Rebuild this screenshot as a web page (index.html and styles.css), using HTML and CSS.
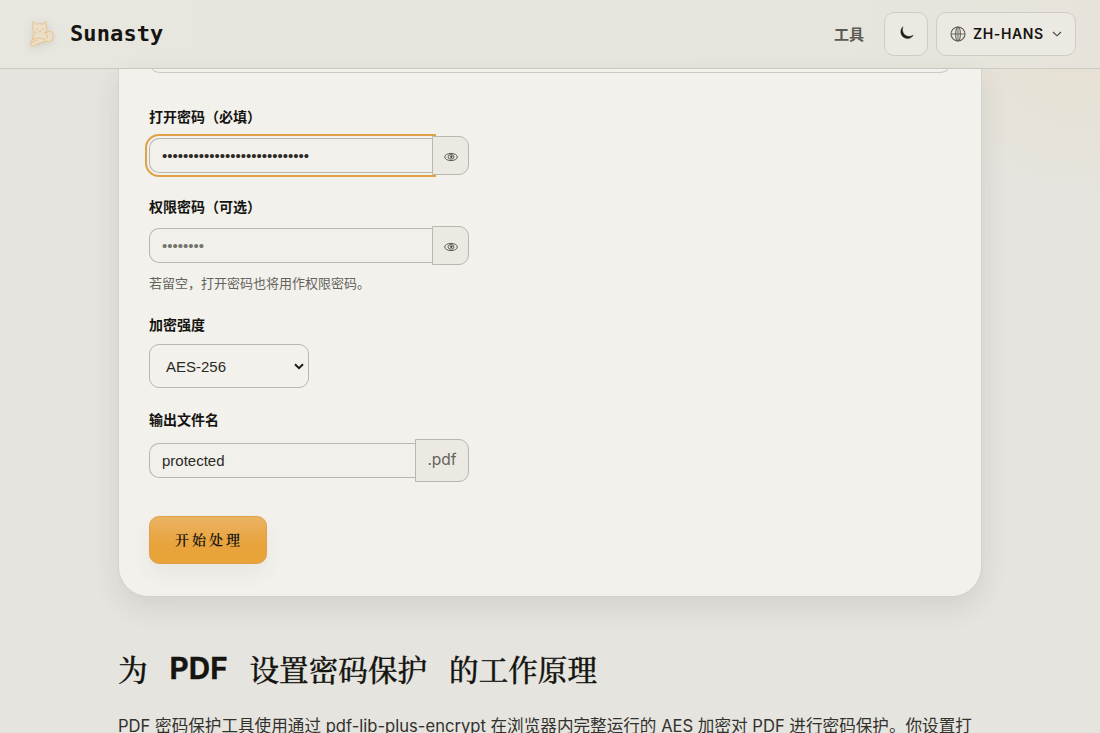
FILE: index.html
```
<!DOCTYPE html>
<html lang="zh-Hans">
<head>
    <meta charset="UTF-8">
    <meta name="viewport" content="width=device-width, initial-scale=1.0">
    <title>Sunasty</title>
    <link rel="stylesheet" href="styles.css">
</head>
<body>
    <header class="site-header">
        <a class="brand" href="#">
            <svg class="brand-logo" viewBox="0 0 24 26" fill="none" stroke="#e8c08a" stroke-width="0.9" stroke-linejoin="round" stroke-linecap="round">
                <path d="M4 1.500 L7 4 Q10 3.200 13 4 L16 1.500 L17 8 Q17.500 13 10.500 13.500 Q3.500 13 3.700 8 Z" fill="#ecdfc8"/>
                <path d="M4.500 13 L3.500 18.500 L2 21 Q1 24 3 25.300 Q5 25.500 8 23 L16 20.500 Q22 21.500 23 18 Q24 14 22 11.500 Q19 9.500 16 12.500" fill="#ecdfc8"/>
                <path d="M7 8.500 l1.500 .6 M14 8.500 l-1.500 .6 M9.500 11 q1 1 2 0 M4 18.500 Q9 16 15 18.500 L16 20.500 M16 12.500 Q18.500 15 17.500 18 M2.500 21.500 L8 19.500"/>
            </svg>
            <span class="brand-name">Sunasty</span>
        </a>
        <nav class="nav">
            <a class="nav-link" href="#">工具</a>
            <button class="nav-button theme-button" aria-label="Theme">
                <svg width="14" height="14" viewBox="0 0 14 14">
                    <path d="M3 .7 C1.500 4.500 3.200 9.300 8 10.300 C10 10.800 12 10 13.200 9.100 C11.500 12.700 7 13.700 3.600 11.200 C-.2 8.400 .1 3 3 .7 Z" fill="#1c1b18" stroke="#1c1b18" stroke-width=".4"/>
                </svg>
            </button>
            <button class="nav-button lang-button">
                <svg width="16" height="16" viewBox="0 0 16 16" fill="none" stroke="#5c5a52" stroke-width="1.100">
                    <circle cx="8" cy="8" r="7"/>
                    <ellipse cx="8" cy="8" rx="2.300" ry="7"/>
                    <path d="M1 8 H15 M8 1 V15" stroke-width=".9"/>
                </svg>
                <span>ZH-HANS</span>
                <svg class="chevron" width="10" height="6" viewBox="0 0 10 6" fill="none" stroke="#44423c" stroke-width="1.100">
                    <path d="M1 1 L5 4.800 L9 1"/>
                </svg>
            </button>
        </nav>
    </header>

    <main class="page">
        <section class="tool-card">
            <div class="drop-area"></div>

            <form class="tool-form">
                <div class="field">
                    <label for="open-password">打开密码（必填）</label>
                    <div class="input-row">
                        <div class="input focused" id="open-password">••••••••••••••••••••••••••••</div>
                        <button type="button" class="addon eye-button" aria-label="显示密码">
                            <svg class="eye" viewBox="0 0 14 10" fill="none" stroke="#4a4842">
                                <ellipse cx="7" cy="5" rx="6.300" ry="3.600" stroke-width=".9"/>
                                <ellipse cx="7" cy="4.900" rx="3" ry="2.300" stroke-width=".9"/>
                                <circle cx="7.300" cy="4.800" r="1.200" fill="#4a4842" stroke="none"/>
                            </svg>
                        </button>
                    </div>
                </div>

                <div class="field">
                    <label for="owner-password">权限密码（可选）</label>
                    <div class="input-row">
                        <div class="input placeholder" id="owner-password">••••••••</div>
                        <button type="button" class="addon eye-button" aria-label="显示密码">
                            <svg class="eye" viewBox="0 0 14 10" fill="none" stroke="#4a4842">
                                <ellipse cx="7" cy="5" rx="6.300" ry="3.600" stroke-width=".9"/>
                                <ellipse cx="7" cy="4.900" rx="3" ry="2.300" stroke-width=".9"/>
                                <circle cx="7.300" cy="4.800" r="1.200" fill="#4a4842" stroke="none"/>
                            </svg>
                        </button>
                    </div>
                    <p class="hint">若留空，打开密码也将用作权限密码。</p>
                </div>

                <div class="field">
                    <label for="strength">加密强度</label>
                    <div class="select" id="strength">
                        <span>AES-256</span>
                        <svg width="10" height="7" viewBox="0 0 10 7" fill="none" stroke="#1c1b18" stroke-width="2">
                            <path d="M1 1.200 L5 5.200 L9 1.200"/>
                        </svg>
                    </div>
                </div>

                <div class="field">
                    <label for="filename">输出文件名</label>
                    <div class="input-row file-row">
                        <input class="input" id="filename" type="text" value="protected">
                        <span class="addon suffix">.pdf</span>
                    </div>
                </div>

                <button type="button" class="submit-button">开始处理</button>
            </form>
        </section>

        <section class="article">
            <h2><span>为</span><span class="latin">PDF</span><span>设置密码保护</span><span>的工作原理</span></h2>
            <p>PDF 密码保护工具使用通过 pdf-lib-plus-encrypt 在浏览器内完整运行的 AES 加密对 PDF 进行密码保护。你设置打</p>
        </section>
    </main>
</body>
</html>
```

FILE: styles.css
```
* {
    margin: 0;
    padding: 0;
    box-sizing: border-box;
}

body {
    height: 733px;
    overflow: hidden;
    background: radial-gradient(circle at 1080px 40px, #e7e1d4 0, rgba(231, 225, 212, 0.8) 70px, rgba(229, 228, 223, 0) 170px), #e5e4df;
    color: #151410;
    font-family: Inter, "Noto Sans CJK SC", sans-serif;
}

button {
    font-family: inherit;
    color: inherit;
}

.site-header {
    height: 69px;
    padding: 0 24px 1px 28px;
    display: flex;
    align-items: center;
    justify-content: space-between;
    background: linear-gradient(90deg, #e7e6df 0%, #e6e6de 75%, #e7e3da 100%);
    border-bottom: 1px solid #cccac4;
}

.brand {
    display: flex;
    align-items: center;
    gap: 15px;
    color: inherit;
    text-decoration: none;
}

.brand-logo {
    width: 27px;
    height: 27px;
    filter: drop-shadow(0 2px 4px rgba(80, 80, 80, 0.15));
}

.brand-name {
    font-family: "DejaVu Sans Mono", monospace;
    font-size: 22px;
    font-weight: bold;
    letter-spacing: 0.1px;
}

.nav {
    display: flex;
    align-items: center;
}

.nav-link {
    margin-right: 20px;
    font-size: 15px;
    font-weight: 700;
    color: #5c5a52;
    text-decoration: none;
}

.nav-button {
    height: 44px;
    display: flex;
    align-items: center;
    border: 1px solid #cfccc4;
    border-radius: 10px;
    background: #ece9e2;
}

.theme-button {
    width: 44px;
    margin-right: 8px;
    padding: 0 0 2px 2px;
    justify-content: center;
}

.lang-button {
    width: 140px;
    padding: 0 13px;
    font-size: 14px;
    font-weight: 600;
    letter-spacing: 0.6px;
}

.lang-button span {
    margin-left: 7px;
}

.chevron {
    margin-left: auto;
}

.page {
    width: 864px;
    margin: 0 auto;
}

.tool-card {
    height: 528px;
    padding: 0 30px;
    background: #f2f1ec;
    border: 1px solid #d4d2cb;
    border-top: none;
    border-radius: 0 0 30px 30px;
    box-shadow: 0 10px 28px rgba(60, 58, 40, 0.11);
}

.drop-area {
    height: 4px;
    margin: 0 3px;
    border: 1px solid #cccac4;
    border-top: none;
    border-radius: 0 0 9px 9px / 0 0 4px 4px;
}

.tool-form {
    width: 320px;
    padding-top: 34px;
}

.field {
    margin-bottom: 22px;
}

.field label {
    display: block;
    height: 20px;
    margin-bottom: 9px;
    font-size: 14px;
    line-height: 20px;
    font-weight: 700;
}

.input-row {
    height: 39px;
    display: flex;
    align-items: center;
}

.input {
    flex: 1;
    min-width: 0;
    height: 35px;
    padding: 0 12px;
    border: 1px solid #b9b7b0;
    border-right: none;
    border-radius: 10px 0 0 10px;
    background: #f1f0eb;
    color: #2b2a26;
    font-family: "Liberation Sans", Arial, sans-serif;
    font-size: 15px;
    line-height: 33px;
}

.focused {
    outline: 2px solid #e0a047;
    outline-offset: 2px;
}

.placeholder {
    color: #76746e;
}

.addon {
    position: relative;
    height: 39px;
    display: flex;
    align-items: center;
    justify-content: center;
    border: 1px solid #b9b7b0;
    border-radius: 0 10px 10px 0;
    background: #ece9e2;
}

.eye-button {
    width: 37px;
}

.eye {
    width: 14px;
    height: 10px;
    margin-top: 2px;
}

.hint {
    height: 20px;
    margin-top: 8px;
    font-size: 13px;
    line-height: 20px;
    color: #65635d;
}

.select {
    width: 160px;
    height: 44px;
    padding: 0 4px 0 16px;
    display: flex;
    align-items: center;
    justify-content: space-between;
    border: 1px solid #b9b7b0;
    border-radius: 10px;
    font-family: "Liberation Sans", Arial, sans-serif;
    font-size: 15px;
    color: #2b2a26;
}

.file-row {
    height: 43px;
}

.suffix {
    width: 54px;
    height: 43px;
    padding-bottom: 2px;
    font-size: 15.5px;
    color: #65635d;
}

.submit-button {
    width: 118px;
    height: 48px;
    margin-top: 12px;
    padding: 0 0 3px 2px;
    border: 1px solid #e0a047;
    border-radius: 10px;
    background: linear-gradient(#ebb364, #e8a33b 60%);
    box-shadow: 0 10px 20px rgba(80, 70, 40, 0.06);
    font-family: "Noto Serif CJK SC", "Noto Sans CJK SC", serif;
    font-size: 14px;
    font-weight: 600;
    letter-spacing: 3px;
}

.article {
    padding-top: 46px;
}

.article h2 {
    height: 50px;
    display: flex;
    gap: 22px;
    font-family: "Noto Serif CJK SC", "Noto Sans CJK SC", serif;
    font-size: 29.6px;
    line-height: 50px;
    font-weight: 500;
    white-space: nowrap;
    -webkit-text-stroke: 0.3px #151410;
}

.article .latin {
    font-family: Inter, sans-serif;
    font-weight: 700;
}

.article p {
    margin-top: 19px;
    font-size: 16.6px;
    line-height: 28px;
    color: #33312c;
    white-space: nowrap;
}
```
